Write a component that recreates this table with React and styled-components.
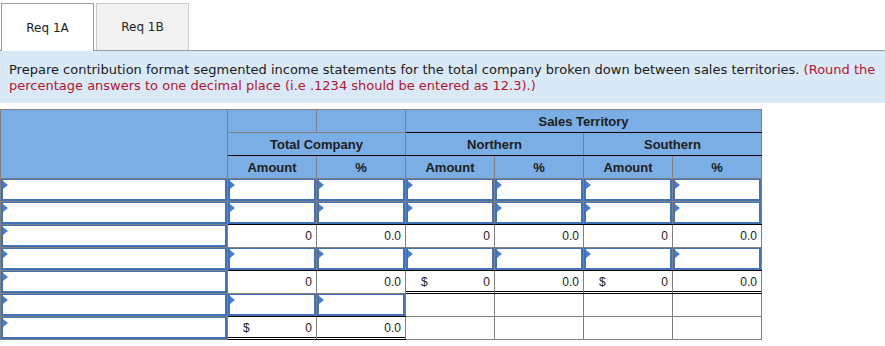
import React from "react";
import styled, { createGlobalStyle, css } from "styled-components";

const GlobalStyle = createGlobalStyle`
  body {
    margin: 0;
    background: #fff;
    font-family: "DejaVu Sans", Verdana, sans-serif;
  }
`;

const Page = styled.div`
  width: 885px;
`;

const TabBar = styled.div`
  display: flex;
  gap: 2px;
  padding: 3px 0 0 1px;
  position: relative;
  z-index: 1;
`;

const Tab = styled.div`
  box-sizing: border-box;
  width: 93px;
  height: 47px;
  display: flex;
  align-items: center;
  justify-content: center;
  font-size: 12px;
  color: #222;
  background: #f2f2f2;
  border: 1px solid #c9c9c9;
  border-bottom: none;

  ${(p) =>
    p.$active &&
    css`
      height: 48px;
      margin-bottom: -1px;
      background: #fff;
      border-color: #9a9a9a;
    `}
`;

const Instructions = styled.div`
  border-top: 1px solid #9a9a9a;
  background: #dae9f7;
  padding: 11px 9px 9px;
  font-size: 13px;
  line-height: 16px;
  color: #1a1a1a;
`;

const Note = styled.span`
  color: #b0172f;
`;

const Sheet = styled.table`
  margin-top: 6px;
  border-collapse: collapse;
  table-layout: fixed;
  width: 762px;
  font-family: "Liberation Sans", Arial, sans-serif;
`;

const Head = styled.th`
  background: #7aaee5;
  border: 1px solid #808080;
  height: 22px;
  padding: 0;
  font-size: 13px;
  font-weight: bold;
  color: #202020;
  text-align: center;
  ${(p) => p.$rule && "border-bottom-color: #000;"}
`;

const lineStyle = {
  grey: "border-bottom: 1px solid #808080;",
  black: "border-bottom: 1px solid #000;",
  double:
    "border-bottom: 1px solid #000; box-shadow: inset 0 -1px 0 #fff, inset 0 -2px 0 #000;",
};

const Cell = styled.td`
  border: 1px solid #808080;
  height: 22px;
  padding: 0;
  background: #fff;
  ${(p) => p.$top && "border-top-color: #000;"}
  ${(p) => p.$bottom && lineStyle[p.$bottom]}
`;

const InputBox = styled.div`
  box-sizing: border-box;
  position: relative;
  height: 22px;
  border: 2px solid #4171b6;
  border-top-width: 1px;
  background: #fff;

  &::before {
    content: "";
    position: absolute;
    top: 1px;
    left: 0;
    border-left: 5px solid #4a7fc6;
    border-top: 4px solid transparent;
    border-bottom: 4px solid transparent;
  }
`;

const Figure = styled.div`
  display: flex;
  justify-content: space-between;
  align-items: center;
  height: 22px;
  padding: 0 4px 0 15px;
  font-size: 12px;
  color: #1a1a1a;
`;

const money = (v) => ({ dollar: true, v });

const rows = [
  { cells: ["in", "in", "in", "in", "in", "in"] },
  { cells: ["in", "in", "in", "in", "in", "in"], bottom: "black" },
  { cells: ["0", "0.0", "0", "0.0", "0", "0.0"], top: "black" },
  { cells: ["in", "in", "in", "in", "in", "in"], bottom: "black" },
  {
    cells: ["0", "0.0", money("0"), "0.0", money("0"), "0.0"],
    top: "black",
    bottoms: [null, null, "double", "double", "double", "double"],
  },
  {
    cells: ["in", "in", "", "", "", ""],
    bottoms: ["black", "black", null, null, null, null],
  },
  {
    cells: [money("0"), "0.0", "", "", "", ""],
    tops: ["black", "black", null, null, null, null],
    bottoms: ["double", "double", null, null, null, null],
  },
];

const renderValue = (c) => {
  if (c === "in") return <InputBox />;
  if (c === "") return null;
  if (typeof c === "object")
    return (
      <Figure>
        <span>$</span>
        <span>{c.v}</span>
      </Figure>
    );
  return (
    <Figure>
      <span />
      <span>{c}</span>
    </Figure>
  );
};

export default function App() {
  return (
    <Page>
      <GlobalStyle />
      <TabBar>
        <Tab $active>Req 1A</Tab>
        <Tab>Req 1B</Tab>
      </TabBar>
      <Instructions>
        Prepare contribution format segmented income statements for the total
        company broken down between sales territories.{" "}
        <Note>
          (Round the
          <br />
          percentage answers to one decimal place (i.e .1234 should be entered
          as 12.3).)
        </Note>
      </Instructions>

      <Sheet>
        <colgroup>
          <col style={{ width: 227 }} />
          <col style={{ width: 89 }} />
          <col style={{ width: 89 }} />
          <col style={{ width: 89 }} />
          <col style={{ width: 89 }} />
          <col style={{ width: 89 }} />
          <col style={{ width: 89 }} />
        </colgroup>
        <thead>
          <tr>
            <Head rowSpan={3} />
            <Head />
            <Head />
            <Head colSpan={4} $rule>
              Sales Territory
            </Head>
          </tr>
          <tr>
            <Head colSpan={2} $rule>
              Total Company
            </Head>
            <Head colSpan={2} $rule>
              Northern
            </Head>
            <Head colSpan={2} $rule>
              Southern
            </Head>
          </tr>
          <tr>
            <Head>Amount</Head>
            <Head>%</Head>
            <Head>Amount</Head>
            <Head>%</Head>
            <Head>Amount</Head>
            <Head>%</Head>
          </tr>
        </thead>
        <tbody>
          {rows.map((row, r) => (
            <tr key={r}>
              <Cell>
                <InputBox />
              </Cell>
              {row.cells.map((c, i) => (
                <Cell
                  key={i}
                  $top={(row.tops && row.tops[i]) || row.top}
                  $bottom={(row.bottoms && row.bottoms[i]) || row.bottom}
                >
                  {renderValue(c)}
                </Cell>
              ))}
            </tr>
          ))}
        </tbody>
      </Sheet>
    </Page>
  );
}
